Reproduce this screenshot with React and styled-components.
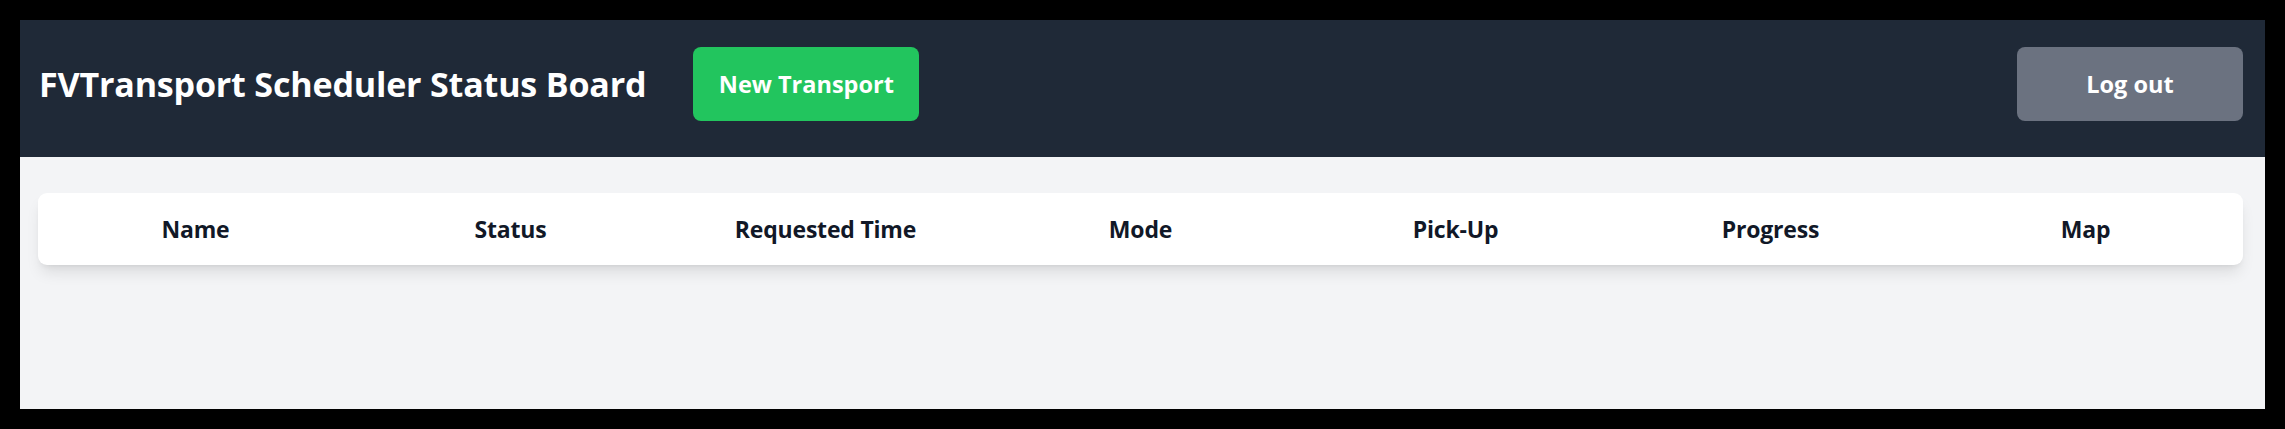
import React from 'react';
import styled, { createGlobalStyle } from 'styled-components';

const GlobalStyle = createGlobalStyle`
    html, body {
        margin: 0;
        background: #000;
    }
    body {
        padding: 20px;
        font-family: "Open Sans", "Noto Sans", sans-serif;
    }
    * {
        box-sizing: border-box;
    }
`;

const Page = styled.div`
    width: 100%;
    height: 389px;
    display: flex;
    flex-direction: column;
    background: #f3f4f6;
`;

const Navbar = styled.header`
    height: 137px;
    flex-shrink: 0;
    display: flex;
    align-items: center;
    padding: 27px 22px 36px 19px;
    background: #1f2937;
`;

const Title = styled.h1`
    margin: 0 47px 0 0;
    color: #fff;
    font-size: 34.1px;
    font-weight: 700;
    letter-spacing: -0.2px;
    white-space: nowrap;
`;

const Button = styled.button`
    height: 74px;
    width: 226px;
    border: none;
    border-radius: 8px;
    color: #fff;
    font-family: inherit;
    font-size: 23.5px;
    font-weight: 700;
    cursor: pointer;
    background: ${(p) => (p.$variant === 'gray' ? '#6b7280' : '#22c55e')};
    margin-left: ${(p) => (p.$push ? 'auto' : '0')};
`;

const Main = styled.main`
    flex: 1;
    padding: 36px 22px 0 18px;
`;

const Table = styled.div`
    height: 72px;
    display: grid;
    grid-template-columns: repeat(7, 1fr);
    align-items: center;
    background: #fff;
    border-radius: 9px;
    box-shadow: 0 10px 15px -3px rgba(0, 0, 0, 0.1), 0 4px 6px -4px rgba(0, 0, 0, 0.1);
`;

const HeadCell = styled.div`
    text-align: center;
    color: #111827;
    font-size: 23px;
    font-weight: 700;
    letter-spacing: -0.2px;
`;

const columns = ['Name', 'Status', 'Requested Time', 'Mode', 'Pick-Up', 'Progress', 'Map'];

export default function App() {
    return (
        <>
            <GlobalStyle />
            <Page>
                <Navbar>
                    <Title>FVTransport Scheduler Status Board</Title>
                    <Button>New Transport</Button>
                    <Button $variant="gray" $push>Log out</Button>
                </Navbar>
                <Main>
                    <Table>
                        {columns.map((c) => (
                            <HeadCell key={c}>{c}</HeadCell>
                        ))}
                    </Table>
                </Main>
            </Page>
        </>
    );
}
